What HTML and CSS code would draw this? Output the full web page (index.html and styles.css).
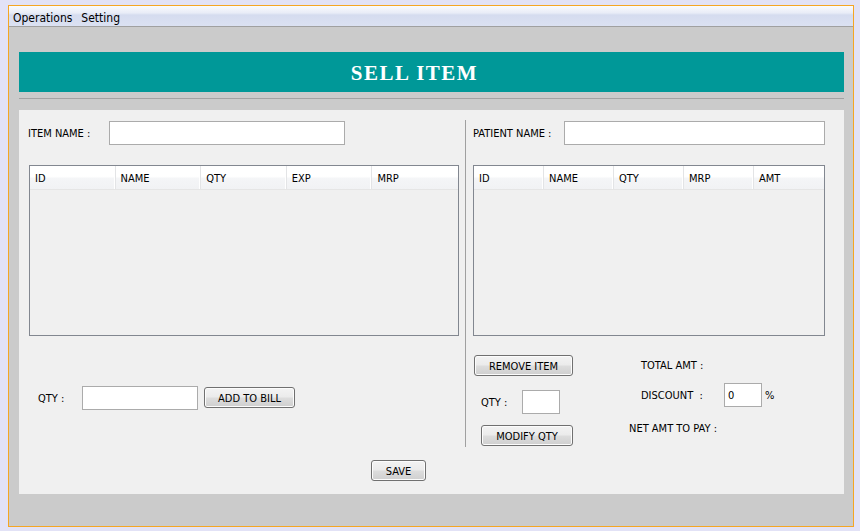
FILE: index.html
```html
<!DOCTYPE html>
<html>
<head>
<meta charset="utf-8">
<link rel="stylesheet" href="styles.css">
</head>
<body>
<div class="window">
  <div class="menubar">
    <span class="menu-item">Operations</span>
    <span class="menu-item">Setting</span>
  </div>
  <div class="content">
    <div class="banner"><span class="banner-title">SELL ITEM</span></div>
    <div class="separator"></div>
    <div class="panel">
      <div class="col-left">
        <div class="field-row">
          <span class="label label-item">ITEM NAME :</span>
          <div class="input input-item"></div>
        </div>
        <div class="table table-left">
          <div class="thead">
            <div class="th">ID</div>
            <div class="th">NAME</div>
            <div class="th">QTY</div>
            <div class="th">EXP</div>
            <div class="th">MRP</div>
          </div>
        </div>
        <div class="qty-row">
          <span class="label label-qty">QTY :</span>
          <div class="input input-qty"></div>
          <button class="btn btn-add">ADD TO BILL</button>
        </div>
      </div>
      <div class="divider"></div>
      <div class="col-right">
        <div class="field-row">
          <span class="label label-patient">PATIENT NAME :</span>
          <div class="input input-patient"></div>
        </div>
        <div class="table table-right">
          <div class="thead">
            <div class="th">ID</div>
            <div class="th">NAME</div>
            <div class="th">QTY</div>
            <div class="th">MRP</div>
            <div class="th">AMT</div>
          </div>
        </div>
        <div class="bill-area">
          <div class="bill-actions">
            <button class="btn btn-remove">REMOVE ITEM</button>
            <div class="mod-row">
              <span class="label label-mqty">QTY :</span>
              <div class="input input-mqty"></div>
            </div>
            <button class="btn btn-modify">MODIFY QTY</button>
          </div>
          <div class="bill-totals">
            <div class="tot-row tot-total"><span class="label">TOTAL AMT :</span></div>
            <div class="tot-row tot-disc">
              <span class="label label-disc">DISCOUNT&nbsp; :</span>
              <div class="input input-disc">0</div>
              <span class="label pct">%</span>
            </div>
            <div class="tot-row tot-net"><span class="label">NET AMT TO PAY :</span></div>
          </div>
        </div>
      </div>
      <div class="footer">
        <button class="btn btn-save">SAVE</button>
      </div>
    </div>
  </div>
</div>
</body>
</html>
```

FILE: styles.css
```css
html, body {
  margin: 0;
  padding: 0;
}
body {
  background: #e2e2f6;
  width: 860px;
  height: 531px;
  overflow: hidden;
  font-family: "DejaVu Sans Condensed", "DejaVu Sans", "Liberation Sans", sans-serif;
  font-size: 11px;
  color: #000;
}
.window {
  margin: 5px 0 0 8px;
  width: 844px;
  height: 520px;
  border: 1px solid #f5a623;
  display: flex;
  flex-direction: column;
  background: #cbcbcb;
}
.menubar {
  height: 20px;
  border-bottom: 1px solid #a0a0a0;
  background: linear-gradient(#fafbfe 0%, #e8ecf7 35%, #d5dcef 45%, #dbe1f2 100%);
  display: flex;
  align-items: center;
  gap: 9px;
  padding-left: 4px;
  font-size: 12px;
}
.menu-item {
  line-height: 16px;
  padding-top: 3px;
}
.content {
  flex: 1;
  padding: 25px 9px 0 10px;
  display: flex;
  flex-direction: column;
}
.banner {
  height: 40px;
  background: #009898;
  display: flex;
  align-items: center;
  justify-content: center;
  padding-right: 34px;
}
.banner-title {
  font-family: "Liberation Serif", "Times New Roman", serif;
  font-weight: bold;
  font-size: 21px;
  letter-spacing: 1.5px;
  color: #fff;
  margin-top: 3px;
}
.separator {
  margin-top: 6px;
  height: 1px;
  background: #a3a3a3;
}
.panel {
  margin-top: 11px;
  height: 384px;
  background: #f0f0f0;
  display: grid;
  grid-template-columns: 446px 1px 1fr;
  grid-template-rows: auto 1fr;
}
.col-left {
  padding: 11px 0 0 9px;
}
.divider {
  margin-top: 10px;
  height: 327px;
  background: #a0a0a0;
}
.col-right {
  padding: 11px 0 0 7px;
}
.field-row {
  display: flex;
  align-items: center;
  height: 24px;
}
.label {
  white-space: nowrap;
  line-height: 14px;
  padding-top: 2px;
}
.input {
  box-sizing: border-box;
  height: 24px;
  background: #fff;
  border: 1px solid #ababab;
}
.label-item { width: 81px; }
.input-item { width: 236px; }
.label-patient { width: 91px; }
.input-patient { width: 261px; }

.table {
  box-sizing: border-box;
  margin-top: 20px;
  height: 171px;
  border: 1px solid #828790;
  background: #f0f0f0;
}
.table-left { margin-left: 1px; width: 430px; }
.table-right { width: 352px; }
.thead {
  display: grid;
  grid-template-columns: repeat(5, 1fr);
  height: 23px;
  background: linear-gradient(#ffffff 0%, #ffffff 45%, #f4f5f7 55%, #f1f2f4 100%);
  border-bottom: 1px solid #e5e5e5;
}
.th {
  box-sizing: border-box;
  padding: 2px 0 0 5px;
  line-height: 21px;
  border-right: 1px solid #e3e4e6;
  box-shadow: inset -1px 0 0 #fff;
}
.th:last-child { border-right: none; box-shadow: none; }

.qty-row {
  margin-top: 50px;
  display: flex;
  align-items: flex-start;
  padding-left: 10px;
  height: 24px;
}
.label-qty { width: 44px; line-height: 24px; padding-top: 1px; }
.input-qty { width: 116px; }

.btn {
  box-sizing: border-box;
  height: 21px;
  padding: 1px 0 0;
  border: 1px solid #707070;
  border-radius: 3px;
  background: linear-gradient(#f3f3f3 0%, #ebebeb 48%, #dddddd 52%, #cfcfcf 100%);
  box-shadow: inset 0 0 0 1px #fcfcfc;
  font-family: inherit;
  font-size: 11px;
  color: #000;
  text-align: center;
}
.btn-add { width: 91px; margin: 1px 0 0 6px; }

.bill-area {
  display: flex;
}
.bill-actions {
  width: 156px;
  display: flex;
  flex-direction: column;
  align-items: flex-start;
}
.btn-remove { width: 99px; margin: 19px 0 0 1px; }
.mod-row {
  margin-top: 14px;
  padding-left: 8px;
  display: flex;
  align-items: center;
}
.label-mqty { width: 41px; }
.input-mqty { width: 38px; height: 24px; }
.btn-modify { width: 92px; margin: 11px 0 0 8px; }

.bill-totals {
  display: flex;
  flex-direction: column;
}
.tot-row {
  display: flex;
  align-items: center;
  height: 20px;
}
.tot-total { margin-top: 19px; padding-left: 12px; }
.tot-disc { margin-top: 8px; padding-left: 12px; height: 24px; }
.label-disc { width: 83px; }
.input-disc {
  width: 38px;
  padding: 1px 0 0 3px;
  line-height: 21px;
}
.pct { margin-left: 3px; }
.tot-net { margin-top: 11px; }

.footer {
  grid-column: 1 / 4;
  padding: 13px 0 0 352px;
}
.btn-save { width: 55px; height: 21px; }
```
